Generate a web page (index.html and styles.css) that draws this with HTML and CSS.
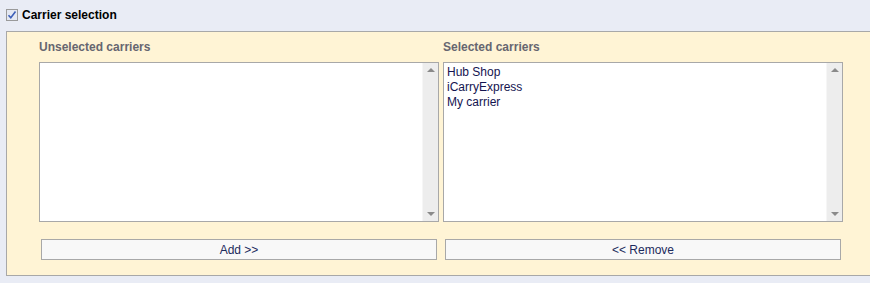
FILE: index.html
```html
<!DOCTYPE html>
<html>
<head>
  <title>Carrier selection</title>
  <link rel="stylesheet" href="styles.css">
</head>
<body>
  <div class="section-header">
    <span class="check-box">
      <svg width="10" height="10" viewBox="0 0 10 10"><path d="M1.5 5.2 L3.8 7.8 L8.5 1.5" fill="none" stroke="#3d5fb8" stroke-width="1.6"/></svg>
    </span>
    <span class="section-title">Carrier selection</span>
  </div>

  <div class="carrier-box">
    <div class="list-label">Unselected carriers</div>
    <div class="list-label">Selected carriers</div>

    <div class="list-box">
      <div class="list-items"></div>
      <div class="scroll-bar">
        <span class="arrow-up"></span>
        <span class="arrow-down"></span>
      </div>
    </div>
    <div class="list-box">
      <div class="list-items">
        <div>Hub Shop</div>
        <div>iCarryExpress</div>
        <div>My carrier</div>
      </div>
      <div class="scroll-bar">
        <span class="arrow-up"></span>
        <span class="arrow-down"></span>
      </div>
    </div>

    <div class="list-button">Add &gt;&gt;</div>
    <div class="list-button">&lt;&lt; Remove</div>
  </div>
</body>
</html>
```

FILE: styles.css
```css
body {
  margin: 0;
  background-color: #e9ecf5;
  font-family: "Liberation Sans", Arial, sans-serif;
  font-size: 12px;
  overflow: hidden;
}

.section-header {
  display: flex;
  align-items: center;
  height: 31px;
  padding-left: 6px;
  box-sizing: border-box;
  padding-bottom: 2px;
}

.check-box {
  width: 10px;
  height: 10px;
  border: 1px solid #9a9a9a;
  background-color: #e4e8f2;
  display: flex;
  justify-content: center;
  align-items: center;
  margin-right: 4px;
}

.check-box svg {
  display: block;
}

.section-title {
  font-weight: bold;
  color: #000;
  line-height: 14px;
}

.carrier-box {
  margin-left: 6px;
  border: 1px solid #a8a8a8;
  border-right: none;
  background-color: #fff4d5;
  padding: 8px 0 15px 32px;
  display: grid;
  grid-template-columns: 400px 400px;
  column-gap: 4px;
}

.list-label {
  font-weight: bold;
  color: #666670;
  line-height: 14px;
  margin-bottom: 8px;
}

.list-box {
  height: 160px;
  box-sizing: border-box;
  border: 1px solid #a8a8a8;
  background-color: #fff;
  display: flex;
}

.list-items {
  flex: 1;
  padding: 2px 3px;
  color: #141450;
  line-height: 15px;
}

.scroll-bar {
  width: 15px;
  background-color: #ededed;
  border-left: 1px solid #f6f6f6;
  position: relative;
}

.arrow-up,
.arrow-down {
  position: absolute;
  left: 4px;
  width: 0;
  height: 0;
  border-left: 4px solid transparent;
  border-right: 4px solid transparent;
}

.arrow-up {
  top: 5px;
  border-bottom: 4px solid #8a8a8a;
}

.arrow-down {
  bottom: 5px;
  border-top: 4px solid #8a8a8a;
}

.list-button {
  margin: 17px 2px 0 2px;
  height: 21px;
  box-sizing: border-box;
  border: 1px solid #a8a8a8;
  background-color: #f8f8f8;
  color: #1c2a5c;
  text-align: center;
  line-height: 20px;
  cursor: pointer;
}
```
